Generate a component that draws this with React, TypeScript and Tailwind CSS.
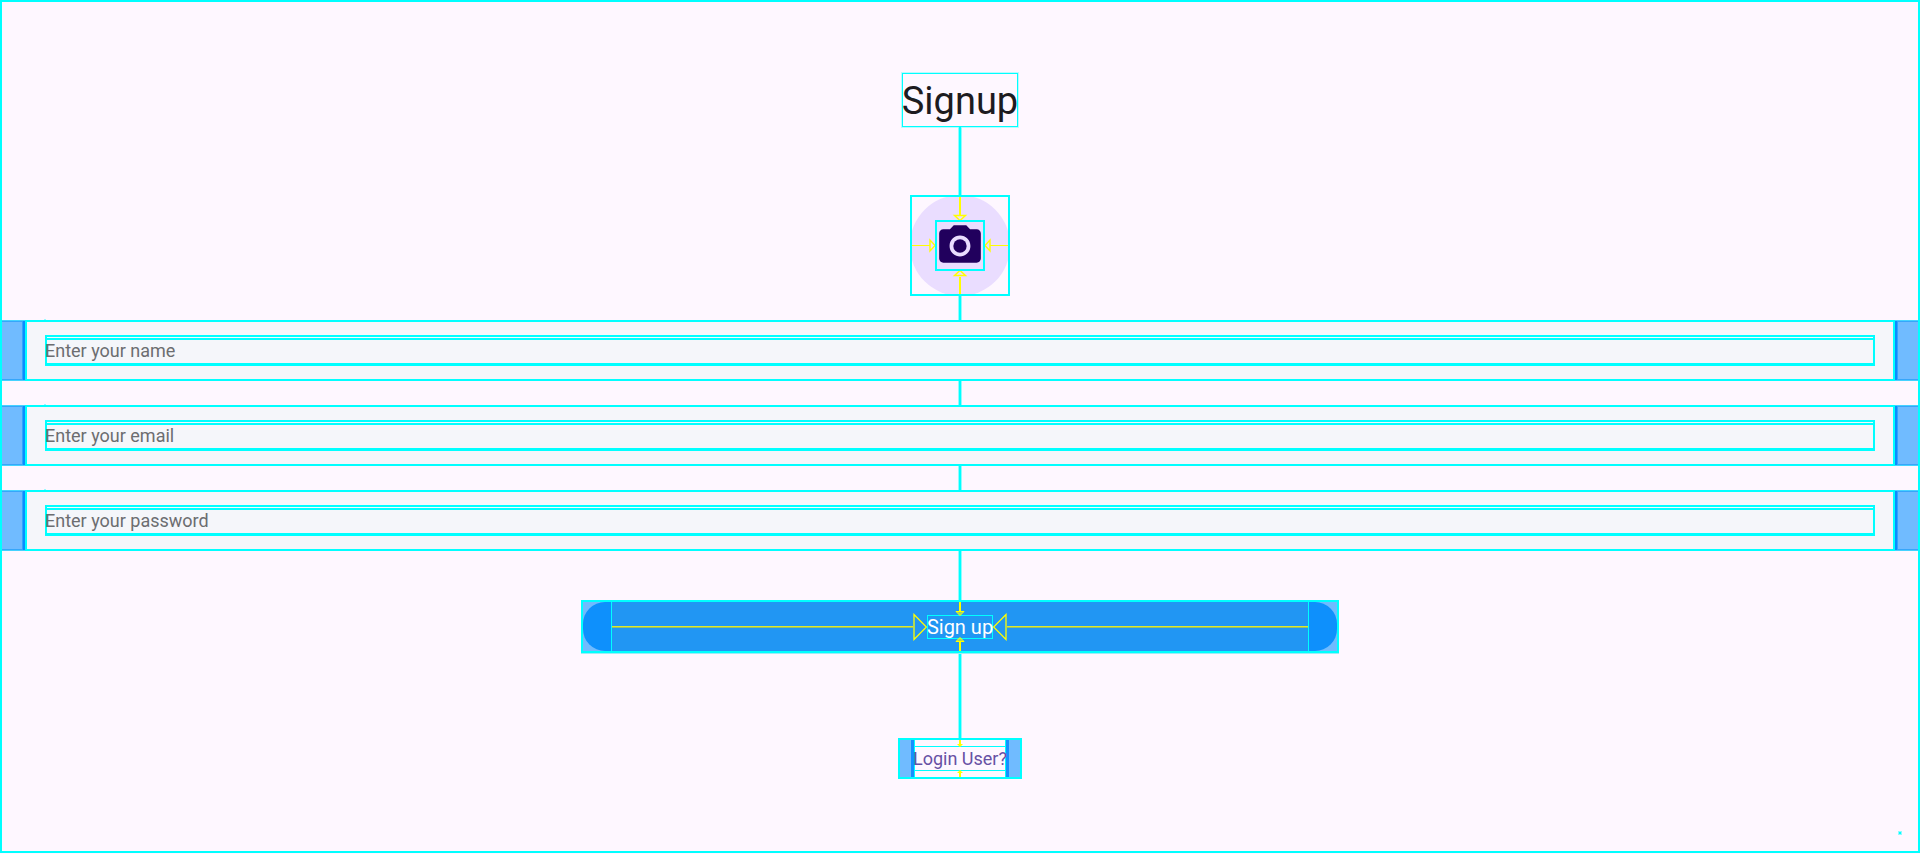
import type { ReactNode } from "react";

function Connector({ className }: { className: string }) {
  return (
    <div aria-hidden="true" className={`w-1 shrink-0 border-x border-[#8ffdff] bg-[#00ffff] bg-clip-padding ${className}`} />
  );
}

function Gutter({ side }: { side: "left" | "right" }) {
  return (
    <div
      aria-hidden="true"
      className={`flex w-[23px] shrink-0 border-y border-[#45d2ff] bg-[#70bbff] ${side === "left" ? "justify-end" : "justify-start"}`}
    >
      <div className="w-full border-y border-[#36a6fa]" />
      <div className={`w-[3px] shrink-0 border-[#2ea4ff] bg-[#0a8bff] ${side === "left" ? "border-l" : "order-first border-r"}`} />
    </div>
  );
}

function Field({ id, type, placeholder }: { id: string; type: string; placeholder: string }) {
  return (
    <div className="relative flex h-[61px] w-full shrink-0">
      <span aria-hidden="true" className="absolute -top-px left-[42px] h-px w-0.5 bg-[#9afaff]" />
      <Gutter side="left" />
      <label
        htmlFor={id}
        className="flex min-w-0 grow items-center border-2 border-[#00ffff] bg-[#f5f6fa] px-[18px]"
      >
        <span className="flex h-[31px] w-full border-2 border-b-3 border-[#00ffff] pt-px">
          <input
            id={id}
            type={type}
            aria-label={placeholder}
            placeholder={placeholder}
            className="-ml-0.5 min-w-0 grow border-t-2 border-[#00ffff] bg-transparent pb-0.5 text-[18px] leading-5 text-[#1d1b20] outline-none placeholder:text-[#6c6d70]"
          />
        </span>
      </label>
      <Gutter side="right" />
    </div>
  );
}

function AvatarButton() {
  return (
    <button
      type="button"
      aria-label="Choose a photo"
      className="relative flex h-[101px] w-[100px] shrink-0 items-center justify-center"
    >
      <span className="absolute inset-0 rounded-full bg-[#eaddff]" />
      <svg aria-hidden="true" viewBox="0 0 100 101" className="absolute inset-0 h-full w-full" fill="none" stroke="#ffff00">
        <path strokeWidth="2" d="M50 2v18M50 99V82" />
        <path strokeWidth="1" d="M2 50.5h18M98 50.5H80" />
        <path strokeWidth="1.4" d="M44.5 20.5h11l-5.500 5zM44.500 80.500h11l-5.500-5zM20 45v11l5-5.500zM80 45v11l-5-5.500z" />
      </svg>
      <span className="absolute inset-0 border-2 border-[#00ffff]" />
      <span className="relative flex h-[51px] w-[50px] items-center justify-center border-2 border-[#00ffff]">
        <svg aria-hidden="true" viewBox="0 0 24 24" className="h-[50px] w-[50px] shrink-0" fill="#21005d">
          <circle cx="12" cy="12" r="3.2" />
          <path d="M9 2L7.17 4H4c-1.1 0-2 .9-2 2v12c0 1.1.9 2 2 2h16c1.1 0 2-.9 2-2V6c0-1.1-.9-2-2-2h-3.17L15 2H9zm3 15c-2.76 0-5-2.24-5-5s2.24-5 5-5 5 2.24 5 5-2.24 5-5 5z" />
        </svg>
      </span>
    </button>
  );
}

function SideArrow({ flip }: { flip?: boolean }) {
  return (
    <span aria-hidden="true" className={`flex min-w-0 flex-1 items-center ${flip ? "flex-row-reverse" : ""}`}>
      <span className="h-0.5 grow border-t border-[#e0e828] bg-[#90c070]" />
      <svg viewBox="0 0 14 28" className={`h-7 w-3.5 shrink-0 ${flip ? "-scale-x-100" : ""}`} fill="none" stroke="#ffff00" strokeWidth="1.3">
        <path d="M1 1.500v25L13.400 14z" />
      </svg>
    </span>
  );
}

function VerticalArrow({ up, className }: { up?: boolean; className: string }) {
  return (
    <svg
      aria-hidden="true"
      viewBox="0 0 10 14"
      className={`absolute left-1/2 h-3.5 w-2.5 -translate-x-1/2 ${up ? "rotate-180" : ""} ${className}`}
      fill="none"
      stroke="#ffff00"
    >
      <path strokeWidth="2" d="M5 0v10" />
      <path strokeWidth="1" fill="#ffff00" fillOpacity=".6" d="M1 9.500h8L5 13.500z" />
    </svg>
  );
}

function SubmitButton({ children }: { children: ReactNode }) {
  return (
    <button
      type="submit"
      className="relative flex h-[53px] w-[758px] max-w-full shrink-0 border-2 border-[#00ffff] bg-[#70bbff] text-[20px] text-white shadow-[0_1px_0_#9ceef5]"
    >
      <span className="flex h-full w-full items-stretch overflow-hidden rounded-[22px] bg-[#0e90fc]">
        <span className="mx-7 flex min-w-0 grow items-center border-x border-[#00ffff] bg-[#2196f3]">
          <SideArrow />
          <span className="flex h-6 w-[66px] items-center justify-center whitespace-nowrap border border-[#00ffff] leading-6">
            {children}
          </span>
          <SideArrow flip />
        </span>
      </span>
      <VerticalArrow className="top-0" />
      <VerticalArrow up className="bottom-0" />
    </button>
  );
}

function LoginLink() {
  return (
    <a
      href="#login"
      className="relative flex h-[41px] w-[124px] shrink-0 border-2 border-[#00ffff] text-[18px] text-[#6750a4]"
    >
      <span className="w-[14px] shrink-0 border-r-3 border-[#148fff] bg-[#70bbff]" />
      <span className="flex min-w-0 grow items-center border-x border-[#00ffff]">
        <span className="flex h-[25px] w-full items-center justify-center whitespace-nowrap border-y border-[#00ffff]">
          <span className="relative z-10">Login User?</span>
        </span>
      </span>
      <span className="w-[14px] shrink-0 border-l-3 border-[#148fff] bg-[#70bbff]" />
      <svg aria-hidden="true" viewBox="0 0 6 37" className="absolute left-1/2 top-0 h-full w-1.5 -translate-x-1/2" fill="#ffff00">
        <path d="M2 0h2v4h2L3 7 0 4h2zM2 37h2v-4h2l-3-3-3 3h2z" />
      </svg>
    </a>
  );
}

export default function App() {
  return (
    <div className="min-h-screen bg-[#fef7ff] pb-px font-[Roboto,sans-serif]">
      <main className="relative flex min-h-[calc(100vh-1px)] flex-col border-2 border-[#00ffff] pt-[71px]">
        <form className="flex w-full flex-col items-center">
          <h1 className="flex h-[54px] w-[116px] items-center justify-center whitespace-nowrap border border-[#00ffff] pt-0.5 text-[38px] text-[#1d1b20] shadow-[0_0_0_1px_#b8fbff]">
            Signup
          </h1>
          <Connector className="h-[68px]" />
          <AvatarButton />
          <Connector className="h-6" />
          <Field id="name" type="text" placeholder="Enter your name" />
          <Connector className="h-6" />
          <Field id="email" type="email" placeholder="Enter your email" />
          <Connector className="h-6" />
          <Field id="password" type="password" placeholder="Enter your password" />
          <Connector className="h-[49px]" />
          <SubmitButton>Sign up</SubmitButton>
          <Connector className="h-[85px]" />
          <LoginLink />
        </form>
        <span aria-hidden="true" className="absolute bottom-4 right-4 size-1 border border-[#90fbff] bg-[#00ffff]" />
      </main>
    </div>
  );
}
